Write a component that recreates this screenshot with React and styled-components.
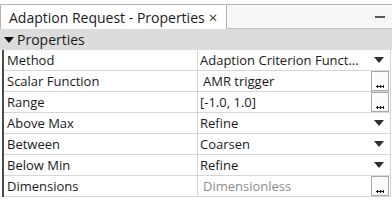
import React from 'react';
import styled, { createGlobalStyle } from 'styled-components';

const Global = createGlobalStyle`
  html, body { margin: 0; padding: 0; background: #ffffff; }
  body { font-family: "Open Sans", "Noto Sans", sans-serif; color: #1a1a1a; }
`;

const Panel = styled.div`
  width: 392px;
  padding-top: 4px;
`;

const TabBar = styled.div`
  display: flex;
  height: 24px;
  border-top: 1px solid #b4b4b4;
  border-left: 1px solid #b4b4b4;
  background: #f7f7f7;
`;

const Tab = styled.div`
  display: flex;
  align-items: center;
  gap: 4px;
  padding: 0 9px 0 8px;
  background: #ffffff;
  border-right: 1px solid #b4b4b4;
  font-size: 14px;
  white-space: nowrap;
`;

const Close = styled.span`
  font-size: 15px;
  color: #333;
`;

const TabRest = styled.div`
  flex: 1;
  display: flex;
  align-items: center;
  justify-content: flex-end;
  padding-right: 7px;
  border-bottom: 1px solid #c4c4c4;
`;

const Minimize = styled.span`
  width: 10px;
  height: 2px;
  background: #5a5a5a;
`;

const GroupHeader = styled.div`
  display: flex;
  align-items: center;
  gap: 3px;
  height: 21px;
  padding-left: 4px;
  background: #dcdcdc;
  font-size: 14px;
`;

const Grid = styled.div`
  display: grid;
  grid-template-columns: 194px 193px;
  margin-left: 2px;
  border-left: 2px solid #4a4a4a;
`;

const Cell = styled.div`
  display: flex;
  align-items: center;
  height: 20px;
  border-bottom: 1px solid #d6d6d6;
  font-size: 13px;
  white-space: nowrap;
  overflow: hidden;
`;

const NameCell = styled(Cell)`
  padding-left: 3px;
  border-right: 1px solid #d6d6d6;
`;

const ValueCell = styled(Cell)`
  justify-content: space-between;
  padding-left: 2px;
  border-right: 1px solid #d6d6d6;
  color: ${(p) => (p.$muted ? '#8c8c8c' : '#1a1a1a')};
`;

const ValueText = styled.span`
  padding-left: ${(p) => (p.$indent ? '3px' : '0')};
`;

const Arrow = styled.span`
  width: 0;
  height: 0;
  margin-right: 6px;
  border-left: 5px solid transparent;
  border-right: 5px solid transparent;
  border-top: 6px solid #2e2e2e;
`;

const DotsButton = styled.span`
  box-sizing: border-box;
  align-self: stretch;
  width: 18px;
  margin-right: 1px;
  border: 1px solid #a8a8a8;
  background: #fbfbfb;
  display: flex;
  align-items: flex-end;
  justify-content: center;
  padding-bottom: 2px;
`;

const Dots = () => (
  <svg width="8" height="3" viewBox="0 0 8 3">
    <rect x="0" y="1" width="8" height="1" fill="#1a1a1a" />
    <rect x="1" y="0" width="1" height="3" fill="#1a1a1a" />
    <rect x="4" y="0" width="1" height="3" fill="#1a1a1a" />
    <rect x="7" y="0" width="1" height="3" fill="#1a1a1a" />
  </svg>
);

const rows = [
  { name: 'Method', value: 'Adaption Criterion Funct...', kind: 'drop' },
  { name: 'Scalar Function', value: 'AMR trigger', kind: 'dots', indent: true },
  { name: 'Range', value: '[-1.0, 1.0]', kind: 'dots' },
  { name: 'Above Max', value: 'Refine', kind: 'drop' },
  { name: 'Between', value: 'Coarsen', kind: 'drop' },
  { name: 'Below Min', value: 'Refine', kind: 'drop' },
  { name: 'Dimensions', value: 'Dimensionless', kind: 'dots', muted: true, indent: true },
];

export default function App() {
  return (
    <>
      <Global />
      <Panel>
        <TabBar>
          <Tab>
            Adaption Request - Properties
            <Close>×</Close>
          </Tab>
          <TabRest>
            <Minimize />
          </TabRest>
        </TabBar>
        <GroupHeader>
          <svg width="10" height="6" viewBox="0 0 10 6">
            <path d="M0 0 H10 L5 6 Z" fill="#111" />
          </svg>
          Properties
        </GroupHeader>
        <Grid>
          {rows.map((r) => (
            <React.Fragment key={r.name}>
              <NameCell>{r.name}</NameCell>
              <ValueCell $muted={r.muted}>
                <ValueText $indent={r.indent}>{r.value}</ValueText>
                {r.kind === 'drop' ? <Arrow /> : <DotsButton><Dots /></DotsButton>}
              </ValueCell>
            </React.Fragment>
          ))}
        </Grid>
      </Panel>
    </>
  );
}
